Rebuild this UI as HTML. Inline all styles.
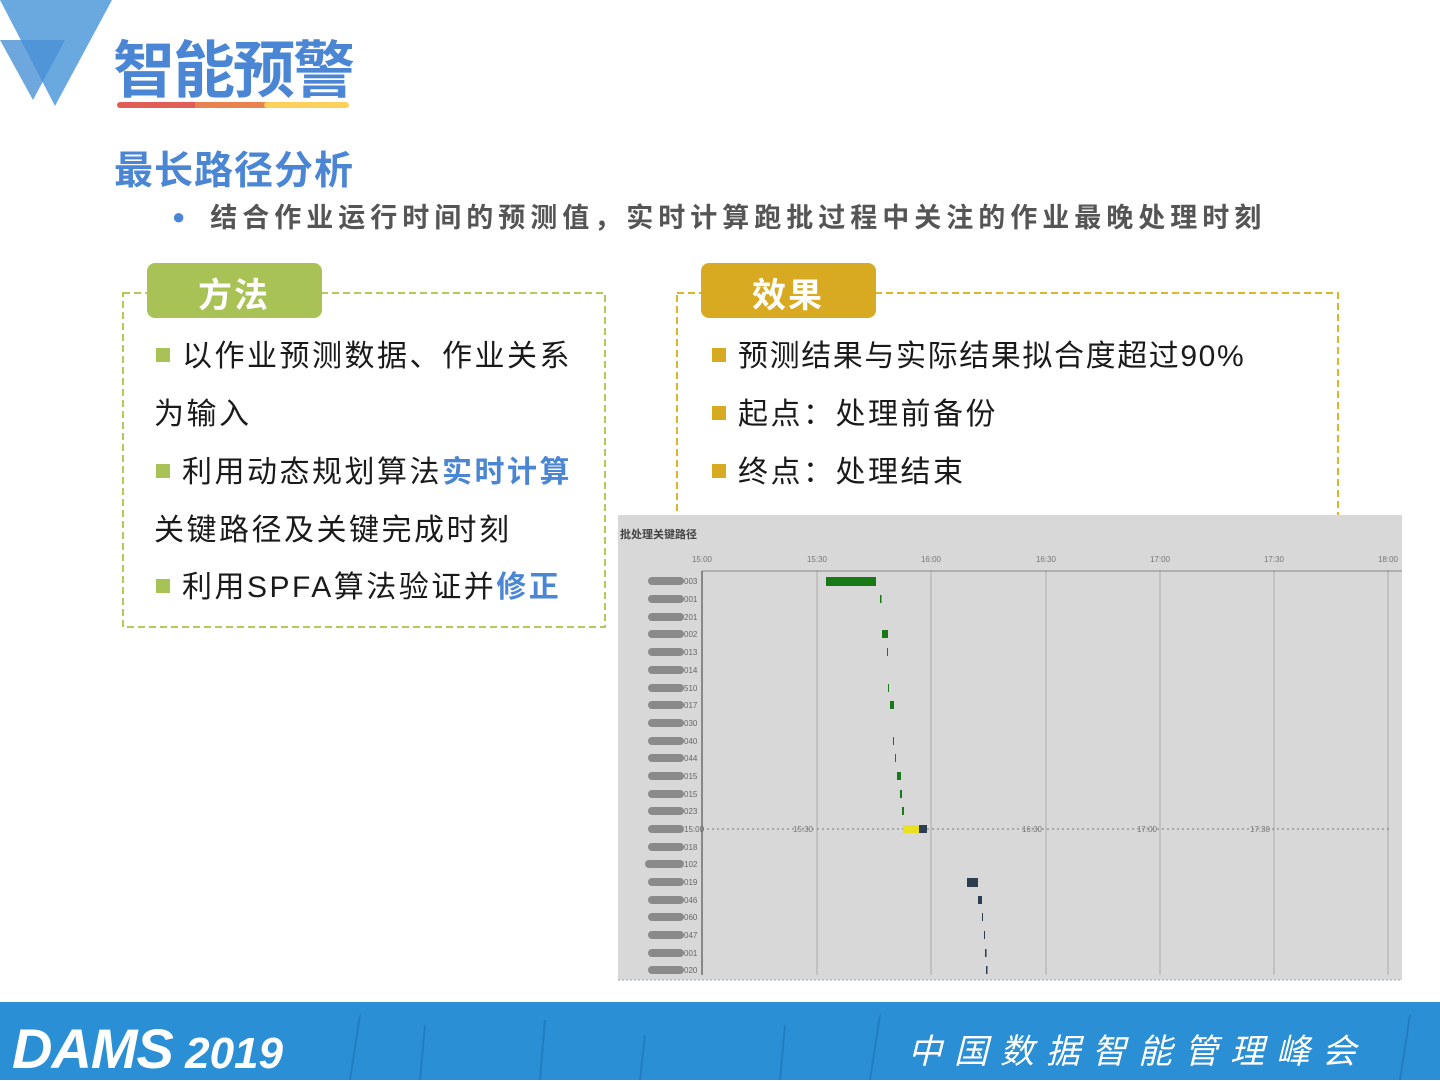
<!DOCTYPE html>
<html><head><meta charset="utf-8"><style>
body{margin:0;width:1440px;height:1080px;position:relative;background:#fff;overflow:hidden;font-family:"Liberation Sans","Noto Sans CJK SC",sans-serif}
.a{position:absolute;white-space:nowrap}
.t{font-size:30px;color:#1a1a1a;letter-spacing:2.5px}
.sq{display:inline-block;width:14px;height:14px;margin-right:12px;vertical-align:middle;position:relative;top:-3px}
.hl{color:#4a86d4;font-weight:bold}
</style></head><body>
<svg class="a" style="left:0;top:0" width="1440" height="1080" viewBox="0 0 1440 1080">
<polygon points="0,0 112,0 55,106" fill="#5aa0dc" opacity="0.9"/>
<polygon points="0,40 65,40 33,100" fill="#4a90d6" opacity="0.8"/>
<line x1="120" y1="105" x2="195" y2="105" stroke="#e05e55" stroke-width="6" stroke-linecap="round"/>
<line x1="195" y1="105" x2="267" y2="105" stroke="#e8834f" stroke-width="6"/>
<line x1="267" y1="105" x2="346" y2="105" stroke="#fcd05a" stroke-width="6" stroke-linecap="round"/>
<rect x="123" y="293" width="482" height="334" fill="none" stroke="#b5c95a" stroke-width="2" stroke-dasharray="7,4"/>
<rect x="677" y="293" width="661" height="240" fill="none" stroke="#d9b728" stroke-width="2" stroke-dasharray="7,4"/>
<rect x="147" y="263" width="175" height="55" rx="8" fill="#a8c255"/>
<rect x="701" y="263" width="175" height="55" rx="8" fill="#d7aa22"/>
<rect x="618" y="515" width="784" height="465" fill="#d8d8d8"/>
<line x1="618" y1="980" x2="1402" y2="980" stroke="#9ab" stroke-dasharray="2,2"/>
<g stroke="#aaa" stroke-width="1">
<line x1="817" y1="570" x2="817" y2="975"/><line x1="931" y1="570" x2="931" y2="975"/><line x1="1046" y1="570" x2="1046" y2="975"/><line x1="1160" y1="570" x2="1160" y2="975"/><line x1="1274" y1="570" x2="1274" y2="975"/><line x1="1388" y1="570" x2="1388" y2="975"/>
</g>
<line x1="702" y1="571" x2="1402" y2="571" stroke="#888"/>
<line x1="702" y1="571" x2="702" y2="975" stroke="#888" stroke-width="2"/>
<line x1="702" y1="829" x2="1390" y2="829" stroke="#777" stroke-dasharray="2,3"/>
<g font-size="8" fill="#777" text-anchor="middle">
<text x="702" y="562">15:00</text><text x="817" y="562">15:30</text><text x="931" y="562">16:00</text><text x="1046" y="562">16:30</text><text x="1160" y="562">17:00</text><text x="1274" y="562">17:30</text><text x="1388" y="562">18:00</text>
<text x="803" y="832">15:30</text><text x="1032" y="832">16:30</text><text x="1147" y="832">17:00</text><text x="1260" y="832">17:30</text>
</g>
<text x="620" y="538" font-size="11" fill="#444" font-weight="bold">批处理关键路径</text>
<g fill="#8a8a8a">
<rect x="648" y="577" width="36" height="8" rx="4"/><rect x="648" y="595" width="36" height="8" rx="4"/><rect x="648" y="613" width="36" height="8" rx="4"/><rect x="648" y="630" width="36" height="8" rx="4"/><rect x="648" y="648" width="36" height="8" rx="4"/><rect x="648" y="666" width="36" height="8" rx="4"/><rect x="648" y="684" width="36" height="8" rx="4"/><rect x="648" y="701" width="36" height="8" rx="4"/><rect x="648" y="719" width="36" height="8" rx="4"/><rect x="648" y="737" width="36" height="8" rx="4"/><rect x="648" y="754" width="36" height="8" rx="4"/><rect x="648" y="772" width="36" height="8" rx="4"/><rect x="648" y="790" width="36" height="8" rx="4"/><rect x="648" y="807" width="36" height="8" rx="4"/><rect x="648" y="825" width="36" height="8" rx="4"/><rect x="648" y="843" width="36" height="8" rx="4"/><rect x="645" y="860" width="39" height="8" rx="4"/><rect x="648" y="878" width="36" height="8" rx="4"/><rect x="648" y="896" width="36" height="8" rx="4"/><rect x="648" y="913" width="36" height="8" rx="4"/><rect x="648" y="931" width="36" height="8" rx="4"/><rect x="648" y="949" width="36" height="8" rx="4"/><rect x="648" y="966" width="36" height="8" rx="4"/>
</g>
<g font-size="8" fill="#666">
<text x="684" y="584">003</text><text x="684" y="602">001</text><text x="684" y="620">201</text><text x="684" y="637">002</text><text x="684" y="655">013</text><text x="684" y="673">014</text><text x="684" y="691">510</text><text x="684" y="708">017</text><text x="684" y="726">030</text><text x="684" y="744">040</text><text x="684" y="761">044</text><text x="684" y="779">015</text><text x="684" y="797">015</text><text x="684" y="814">023</text><text x="684" y="832">15:00</text><text x="684" y="850">018</text><text x="684" y="867">102</text><text x="684" y="885">019</text><text x="684" y="903">046</text><text x="684" y="920">060</text><text x="684" y="938">047</text><text x="684" y="956">001</text><text x="684" y="973">020</text>
</g>
<g fill="#177a17">
<rect x="826" y="577" width="50" height="9"/><rect x="880" y="595" width="1.5" height="8"/><rect x="882" y="630" width="6" height="8"/><rect x="887" y="648" width="1" height="8"/><rect x="888" y="684" width="1" height="8"/><rect x="890" y="701" width="4" height="8"/><rect x="893" y="737" width="1" height="8"/><rect x="895" y="754" width="1" height="8"/><rect x="897" y="772" width="4" height="8"/><rect x="900" y="790" width="2" height="8"/><rect x="902" y="807" width="2" height="8"/>
</g>
<rect x="903" y="825" width="17" height="8" fill="#e8e020"/>
<g fill="#2c3e50">
<rect x="919" y="825" width="8" height="8"/><rect x="967" y="878" width="11" height="9"/><rect x="978" y="896" width="4" height="8"/><rect x="982" y="913" width="1" height="8"/><rect x="984" y="931" width="1" height="8"/><rect x="985" y="949" width="1.5" height="8"/><rect x="986" y="966" width="1.5" height="8"/>
</g>
<rect x="0" y="1002" width="1440" height="78" fill="#2a8fd4"/>
<g stroke="#1f78b8" stroke-width="2" opacity="0.7">
<line x1="350" y1="1080" x2="360" y2="1015"/><line x1="420" y1="1080" x2="425" y2="1025"/><line x1="540" y1="1080" x2="545" y2="1020"/><line x1="640" y1="1080" x2="645" y2="1035"/><line x1="780" y1="1080" x2="785" y2="1025"/><line x1="870" y1="1080" x2="880" y2="1015"/><line x1="1400" y1="1080" x2="1410" y2="1015"/>
</g>
</svg>
<div class="a" style="left:113px;top:20px;font-size:62px;font-weight:bold;color:#4a86d4;letter-spacing:-2px">智能预警</div>
<div class="a" style="left:114px;top:140px;font-size:39px;font-weight:bold;color:#4a86d4;letter-spacing:1px">最长路径分析</div>
<div class="a" style="left:172px;top:196px;font-size:27px;font-weight:bold;color:#555;letter-spacing:5px"><span style="color:#4a86d4;font-size:22px;position:relative;top:-3px;letter-spacing:0">●</span>&nbsp;&nbsp;结合作业运行时间的预测值，实时计算跑批过程中关注的作业最晚处理时刻</div>
<div class="a" style="left:198px;top:268px;font-size:34px;font-weight:bold;color:#fff;letter-spacing:2px">方法</div>
<div class="a" style="left:752px;top:268px;font-size:34px;font-weight:bold;color:#fff;letter-spacing:2px">效果</div>
<div class="a t" style="left:156px;top:331px"><span class="sq" style="background:#a8c255"></span>以作业预测数据、作业关系</div>
<div class="a t" style="left:154px;top:389px">为输入</div>
<div class="a t" style="left:156px;top:447px"><span class="sq" style="background:#a8c255"></span>利用动态规划算法<span class="hl">实时计算</span></div>
<div class="a t" style="left:154px;top:505px">关键路径及关键完成时刻</div>
<div class="a t" style="left:156px;top:562px"><span class="sq" style="background:#a8c255"></span>利用SPFA算法验证并<span class="hl">修正</span></div>
<div class="a t" style="left:712px;top:331px;letter-spacing:1.6px"><span class="sq" style="background:#d7aa22"></span>预测结果与实际结果拟合度超过90%</div>
<div class="a t" style="left:712px;top:389px"><span class="sq" style="background:#d7aa22"></span>起点：处理前备份</div>
<div class="a t" style="left:712px;top:447px"><span class="sq" style="background:#d7aa22"></span>终点：处理结束</div>
<div class="a" style="left:12px;top:1016px;font-size:56px;font-weight:bold;font-style:italic;color:#fff;letter-spacing:-1px">DAMS<span style="font-size:44px;letter-spacing:0"> 2019</span></div>
<div class="a" style="left:908px;top:1024px;font-size:34px;font-style:italic;color:#fff;letter-spacing:12px">中国数据智能管理峰会</div>
</body></html>
